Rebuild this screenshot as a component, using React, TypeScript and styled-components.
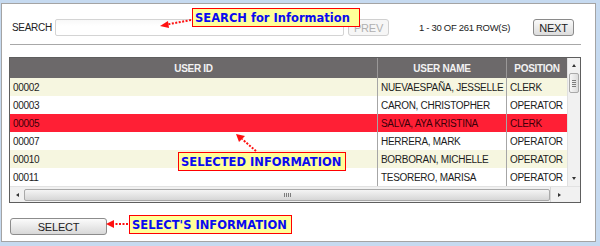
import React from 'react';
import styled, { createGlobalStyle } from 'styled-components';

const GlobalStyle = createGlobalStyle`
    html, body {
        margin: 0;
        padding: 0;
        background: #c6daf0;
        width: 600px;
        height: 246px;
        overflow: hidden;
    }
    body {
        font-family: "Liberation Sans", Arial, sans-serif;
    }
`;

const Page = styled.div`
    padding: 3px 0 0 1px;
    width: 600px;
    height: 246px;
    box-sizing: border-box;
`;

const Panel = styled.div`
    position: relative;
    width: 595px;
    height: 239px;
    box-sizing: border-box;
    background: #ffffff;
    border: 1px solid #a4a4a4;
    padding: 15px 0 0 7px;
`;

const SearchRow = styled.div`
    display: flex;
    align-items: center;
    height: 17px;
`;

const Label = styled.span`
    font-size: 10px;
    letter-spacing: -0.3px;
    color: #222;
    margin-left: 3px;
    width: 43px;
`;

const SearchInput = styled.div`
    width: 289px;
    height: 17px;
    box-sizing: border-box;
    border: 1px solid #d4d4d4;
    border-radius: 2px;
    background: linear-gradient(#f8f8f8, #ffffff 40%);
`;

const NavButton = styled.div<{ $disabled?: boolean }>`
    width: 41px;
    height: 17px;
    box-sizing: border-box;
    display: flex;
    align-items: center;
    justify-content: center;
    font-size: 11px;
    letter-spacing: -0.2px;
    color: ${p => (p.$disabled ? '#b0b0b0' : '#222')};
    border: 1px solid ${p => (p.$disabled ? '#d0d0d0' : '#8a8a8a')};
    border-radius: 3px;
    background: ${p => (p.$disabled ? '#f6f6f6' : 'linear-gradient(#fafafa, #dcdcdc)')};
`;

const PrevWrap = styled.div`
    margin-left: 4px;
`;

const Count = styled.span`
    font-size: 9.5px;
    letter-spacing: -0.3px;
    color: #222;
    margin-left: 30px;
    width: 114px;
`;

const Separator = styled.div`
    width: 571px;
    height: 1px;
    background: #a8a8a8;
    margin: 8px 0 0 1px;
`;

const TableBox = styled.div`
    margin-top: 12px;
    width: 572px;
    box-sizing: border-box;
    border: 1px solid #5e5e5e;
    display: flex;
    flex-direction: column;
`;

const TableTop = styled.div`
    display: flex;
`;

const Grid = styled.div`
    width: 557px;
    display: flex;
    flex-direction: column;
`;

const cols = '368px 129px 60px';

const HeaderRow = styled.div`
    display: grid;
    grid-template-columns: ${cols};
    height: 20px;
    background: #6c696a;
`;

const HeadCell = styled.div<{ $last?: boolean }>`
    display: flex;
    align-items: center;
    justify-content: center;
    font-size: 10px;
    font-weight: bold;
    letter-spacing: -0.3px;
    color: #f2f2f2;
    border-right: ${p => (p.$last ? 'none' : '1px solid #9a9898')};
`;

const BodyRow = styled.div<{ $tone: 'odd' | 'even' | 'selected' }>`
    display: grid;
    grid-template-columns: ${cols};
    height: 18px;
    background: ${p =>
        p.$tone === 'selected' ? '#ff1f35' : p.$tone === 'odd' ? '#f6f6e0' : '#ffffff'};
    color: ${p => (p.$tone === 'selected' ? '#3a0008' : '#1c1c1c')};
`;

const Cell = styled.div<{ $last?: boolean }>`
    display: flex;
    align-items: center;
    padding-left: 3px;
    font-size: 10px;
    letter-spacing: -0.3px;
    white-space: nowrap;
    overflow: hidden;
    border-right: ${p => (p.$last ? 'none' : '1px solid #a6a6a6')};
`;

const VScroll = styled.div`
    width: 13px;
    background: #f1f1f1;
    border-left: 1px solid #e0e0e0;
    box-sizing: border-box;
    position: relative;
    display: flex;
    flex-direction: column;
    align-items: center;
`;

const ArrowBox = styled.div`
    height: 15px;
    width: 12px;
    display: flex;
    align-items: center;
    justify-content: center;
`;

const Tri = styled.div<{ $dir: 'up' | 'down' | 'left' | 'right' }>`
    width: 0;
    height: 0;
    ${p =>
        p.$dir === 'up'
            ? 'border-left: 2.5px solid transparent; border-right: 2.5px solid transparent; border-bottom: 3px solid #333;'
            : p.$dir === 'down'
            ? 'border-left: 2.5px solid transparent; border-right: 2.5px solid transparent; border-top: 3px solid #333;'
            : p.$dir === 'left'
            ? 'border-top: 2.5px solid transparent; border-bottom: 2.5px solid transparent; border-right: 3px solid #333;'
            : 'border-top: 2.5px solid transparent; border-bottom: 2.5px solid transparent; border-left: 3px solid #333;'}
`;

const VThumb = styled.div`
    width: 10px;
    height: 20px;
    box-sizing: border-box;
    border: 1px solid #a9a9a9;
    border-radius: 2px;
    background: linear-gradient(90deg, #f6f6f6, #dcdcdc);
    display: flex;
    flex-direction: column;
    align-items: center;
    justify-content: center;
    gap: 1px;
`;

const VGrip = styled.div`
    width: 4px;
    height: 1px;
    background: #7d7d7d;
`;

const VSpacer = styled.div`
    flex: 1;
`;

const HScroll = styled.div`
    display: flex;
    height: 16px;
    background: #f1f1f1;
    border-top: 1px solid #e2e2e2;
    box-sizing: border-box;
`;

const HTrack = styled.div`
    width: 557px;
    display: flex;
    align-items: center;
`;

const HArrow = styled.div`
    width: 14px;
    height: 15px;
    display: flex;
    align-items: center;
    justify-content: center;
`;

const HThumb = styled.div`
    flex: 1;
    height: 12px;
    box-sizing: border-box;
    border: 1px solid #a9a9a9;
    border-radius: 2px;
    background: linear-gradient(#f4f4f4, #d6d6d6);
    display: flex;
    align-items: center;
    justify-content: center;
    gap: 1px;
`;

const HGrip = styled.div`
    width: 1px;
    height: 4px;
    background: #7d7d7d;
`;

const RightArrow = styled(HArrow)`
    border-left: 1px solid #d6d6d6;
    width: 16px;
`;

const Corner = styled.div`
    width: 13px;
    background: #f1f1f1;
`;

const SelectButton = styled.div`
    margin: 15px 0 0 1px;
    width: 97px;
    height: 17px;
    box-sizing: border-box;
    border: 1px solid #8c8c8c;
    border-radius: 3px;
    background: linear-gradient(#fbfbfb, #d8d8d8);
    display: flex;
    align-items: center;
    justify-content: center;
    font-size: 11px;
    letter-spacing: -0.2px;
    color: #222;
`;

const Callout = styled.div<{ $left: number; $top: number; $width: number }>`
    position: absolute;
    left: ${p => p.$left}px;
    top: ${p => p.$top}px;
    width: ${p => p.$width}px;
    height: 19px;
    box-sizing: border-box;
    border: 1px solid #ff0000;
    background: #ffff99;
    color: #0a0af0;
    font-family: "DejaVu Sans", Verdana, sans-serif;
    font-weight: bold;
    font-size: 11.5px;
    display: flex;
    align-items: center;
    padding-left: 2px;
    white-space: nowrap;
    z-index: 2;
`;

const Overlay = styled.svg`
    position: absolute;
    left: -2px;
    top: -4px;
    width: 600px;
    height: 246px;
    pointer-events: none;
    z-index: 3;
`;

const rows: { id: string; name: string; pos: string }[] = [
    { id: '00002', name: 'NUEVAESPAÑA, JESSELLE', pos: 'CLERK' },
    { id: '00003', name: 'CARON, CHRISTOPHER', pos: 'OPERATOR' },
    { id: '00005', name: 'SALVA, AYA KRISTINA', pos: 'CLERK' },
    { id: '00007', name: 'HERRERA, MARK', pos: 'OPERATOR' },
    { id: '00010', name: 'BORBORAN, MICHELLE', pos: 'OPERATOR' },
    { id: '00011', name: 'TESORERO, MARISA', pos: 'OPERATOR' },
];

const Arrows: React.FC = () => (
    <Overlay viewBox="0 0 600 246">
        {/* search callout arrow */}
        <path d="M191 20 L167 24.5" stroke="#ff1010" strokeWidth="2" strokeDasharray="2 1.5" fill="none" />
        <path d="M160 26 L168 21 L169 28 Z" fill="#ff1010" />
        {/* selected row arrow */}
        <path d="M256 151 L242 139" stroke="#ff1010" strokeWidth="2" strokeDasharray="2 1.5" fill="none" />
        <path d="M236 134 L245 136 L239 142 Z" fill="#ff1010" />
        {/* select button arrow */}
        <path d="M128 224 L113 224" stroke="#ff1010" strokeWidth="2" strokeDasharray="2 1.5" fill="none" />
        <path d="M106 224 L114 220 L114 228 Z" fill="#ff1010" />
    </Overlay>
);

const App: React.FC = () => {
    return (
        <Page>
            <GlobalStyle />
            <Panel>
                <SearchRow>
                    <Label>SEARCH</Label>
                    <SearchInput />
                    <PrevWrap>
                        <NavButton $disabled>PREV</NavButton>
                    </PrevWrap>
                    <Count>1 - 30 OF 261 ROW(S)</Count>
                    <NavButton>NEXT</NavButton>
                </SearchRow>
                <Separator />
                <TableBox>
                    <TableTop>
                        <Grid>
                            <HeaderRow>
                                <HeadCell>USER ID</HeadCell>
                                <HeadCell>USER NAME</HeadCell>
                                <HeadCell $last>POSITION</HeadCell>
                            </HeaderRow>
                            {rows.map((r, i) => (
                                <BodyRow key={r.id} $tone={i === 2 ? 'selected' : i % 2 === 0 ? 'odd' : 'even'}>
                                    <Cell>{r.id}</Cell>
                                    <Cell>{r.name}</Cell>
                                    <Cell $last>{r.pos}</Cell>
                                </BodyRow>
                            ))}
                        </Grid>
                        <VScroll>
                            <ArrowBox><Tri $dir="up" /></ArrowBox>
                            <VThumb>
                                <VGrip /><VGrip /><VGrip /><VGrip />
                            </VThumb>
                            <VSpacer />
                            <ArrowBox><Tri $dir="down" /></ArrowBox>
                        </VScroll>
                    </TableTop>
                    <HScroll>
                        <HTrack>
                            <HArrow><Tri $dir="left" /></HArrow>
                            <HThumb>
                                <HGrip /><HGrip /><HGrip /><HGrip />
                            </HThumb>
                            <RightArrow><Tri $dir="right" /></RightArrow>
                        </HTrack>
                        <Corner />
                    </HScroll>
                </TableBox>
                <SelectButton>SELECT</SelectButton>
                <Callout $left={190} $top={4} $width={168}>SEARCH for Information</Callout>
                <Callout $left={176} $top={148} $width={168}>SELECTED INFORMATION</Callout>
                <Callout $left={127} $top={211} $width={163}>SELECT'S INFORMATION</Callout>
                <Arrows />
            </Panel>
        </Page>
    );
};

export default App;
